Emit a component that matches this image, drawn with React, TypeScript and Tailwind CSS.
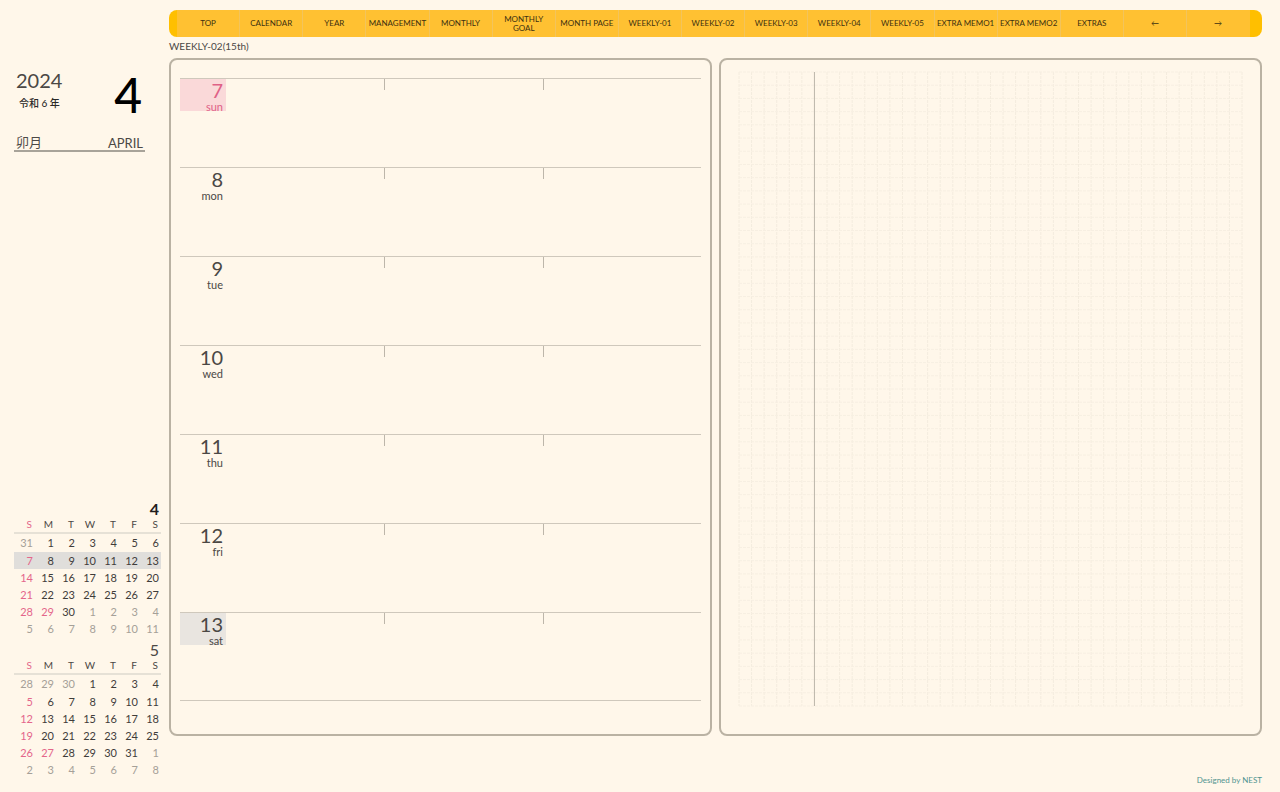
/**
 * Weekly planner page
 * Sidebar with month info and mini calendars, week column and grid memo page
 */

const NAV_ITEMS = [
  "TOP",
  "CALENDAR",
  "YEAR",
  "MANAGEMENT",
  "MONTHLY",
  "MONTHLY GOAL",
  "MONTH PAGE",
  "WEEKLY-01",
  "WEEKLY-02",
  "WEEKLY-03",
  "WEEKLY-04",
  "WEEKLY-05",
  "EXTRA MEMO1",
  "EXTRA MEMO2",
  "EXTRAS",
  "←",
  "→",
];

const WEEKDAYS = ["S", "M", "T", "W", "T", "F", "S"];

const WEEK = [
  { date: 7, name: "sun" },
  { date: 8, name: "mon" },
  { date: 9, name: "tue" },
  { date: 10, name: "wed" },
  { date: 11, name: "thu" },
  { date: 12, name: "fri" },
  { date: 13, name: "sat" },
];

const GRID_COLS = 40;
const GRID_ROWS = 48;

export default function App() {
  return (
    <div className="flex min-h-screen bg-[#fff7ea] font-['Lato','Noto_Sans_CJK_JP',sans-serif] text-[#4b4845]">
      {/* Sidebar */}
      <aside className="flex w-[169px] shrink-0 flex-col pt-[68px] pb-3.5 pl-3.5">
        <MonthInfo />
        <div className="mt-auto mr-2 flex flex-col gap-[5px]">
          <MiniCalendar month={4} prevDays={31} lead={1} days={30} holidays={[29]} activeWeek={1} current />
          <MiniCalendar month={5} prevDays={30} lead={3} days={31} holidays={[27]} />
        </div>
      </aside>

      {/* Planner */}
      <div className="flex min-w-0 flex-1 flex-col pt-2.5 pr-[18px] pb-1.5">
        <NavBar />
        <h1 className="h-[21px] text-[10px] leading-[18px]">WEEKLY-02(15th)</h1>
        <main className="grid grid-cols-2 gap-[7px]">
          <WeekPanel />
          <MemoPanel />
        </main>
        <footer className="mt-auto text-right text-[8px] leading-3 text-[#4f9490]">
          Designed by NEST
        </footer>
      </div>
    </div>
  );
}

function NavBar() {
  return (
    <nav className="flex h-[27px] shrink-0 overflow-hidden rounded-lg bg-[#ffbf00] pr-3 pl-2">
      {NAV_ITEMS.map((item) => (
        <a
          key={item}
          href="#"
          className="flex min-w-0 flex-1 basis-0 items-center justify-center border-r border-[#f3c45c] bg-[#ffc132] text-center text-[8px] leading-[9px] text-[#3d3010] last:border-[#ffc132]"
        >
          <span className={item === "MONTHLY GOAL" ? "w-10" : "whitespace-nowrap"}>{item}</span>
        </a>
      ))}
    </nav>
  );
}

function MonthInfo() {
  return (
    <header className="w-[131px] border-b-2 border-[#a8a399]">
      <div className="flex justify-between pr-[3px] pl-0.5">
        <div>
          <div className="text-[20px] leading-6">2024</div>
          <div className="pl-[3px] text-[10px] leading-[22px] font-medium text-[#2b2927]">令和 6 年</div>
        </div>
        <div className="text-[48px] leading-[54px] font-medium text-black">4</div>
      </div>
      <div className="flex items-end justify-between px-0.5 pt-3">
        <span className="text-[13px] leading-4">卯月</span>
        <span className="text-[13px] leading-[14px]">APRIL</span>
      </div>
    </header>
  );
}

interface MiniCalendarProps {
  month: number;
  prevDays: number;
  lead: number;
  days: number;
  holidays: number[];
  activeWeek?: number;
  current?: boolean;
}

function MiniCalendar({ month, prevDays, lead, days, holidays, activeWeek, current }: MiniCalendarProps) {
  // Always six rows, padded with the neighbouring months
  const cells = Array.from({ length: 42 }, (_, i) => {
    const day = i - lead + 1;
    if (day < 1) return { day: prevDays + day, tone: "text-[#a5a098]" };
    if (day > days) return { day: day - days, tone: "text-[#a5a098]" };
    const red = i % 7 === 0 || holidays.includes(day);
    return { day, tone: red ? "text-[#e4668a]" : "text-[#3f3c3a]" };
  });

  return (
    <table className="w-full table-fixed border-collapse text-right text-[11px]">
      <caption
        className={
          current
            ? "pr-0.5 text-right text-[16px] leading-4 font-bold text-[#1f1d1c]"
            : "pr-0.5 text-right text-[16px] leading-4"
        }
      >
        {month}
      </caption>
      <thead>
        <tr className="h-4 border-b-2 border-[#e6e1d6]">
          {WEEKDAYS.map((d, i) => (
            <th
              key={i}
              className={
                i === 0
                  ? "p-0 pr-[3px] align-top text-[10px] leading-[14px] font-normal text-[#e4668a]"
                  : "p-0 pr-[3px] align-top text-[10px] leading-[14px] font-normal"
              }
            >
              {d}
            </th>
          ))}
        </tr>
      </thead>
      <tbody>
        {[0, 1, 2, 3, 4, 5].map((week) => (
          <tr key={week} className={week === activeWeek ? "bg-[#e0dedb]" : "first:h-[19px]"}>
            {cells.slice(week * 7, week * 7 + 7).map((cell, i) => (
              <td key={i} className={`p-0 pr-0.5 align-top leading-[17px] ${cell.tone}`}>
                {cell.day}
              </td>
            ))}
          </tr>
        ))}
      </tbody>
    </table>
  );
}

function WeekPanel() {
  return (
    <section className="rounded-lg border-2 border-[#bab2a3] px-[9px] pt-[18px] pb-[33px]">
      {WEEK.map((day) => (
        <div
          key={day.date}
          className="grid h-[89px] grid-cols-[46px_158fr_159fr_158fr] border-t border-[#cfc8bc] last:border-b"
        >
          <DayLabel date={day.date} name={day.name} />
          <div />
          <div className="h-[11px] border-l border-[#bdb6aa]" />
          <div className="h-[11px] border-l border-[#bdb6aa]" />
        </div>
      ))}
    </section>
  );
}

function DayLabel({ date, name }: { date: number; name: string }) {
  const tone =
    name === "sun" ? "bg-[#fad9d9] text-[#df6186]" : name === "sat" ? "bg-[#e9e5e0]" : "";

  return (
    <div className={`h-8 pr-[3px] text-right ${tone}`}>
      <div className="text-[20px] leading-[22px]">{date}</div>
      <div className="text-[11px] leading-3">{name}</div>
    </div>
  );
}

function MemoPanel() {
  return (
    <section className="flex rounded-lg border-2 border-[#bab2a3] pt-3 pr-[18px] pb-[28px] pl-[18px]">
      <svg className="h-auto w-full flex-1 overflow-visible" aria-hidden="true">
        {Array.from({ length: GRID_COLS + 1 }, (_, i) => (
          <line
            key={`v${i}`}
            x1={`${(i * 100) / GRID_COLS}%`}
            x2={`${(i * 100) / GRID_COLS}%`}
            y1="0"
            y2="100%"
            stroke="#f4ecde"
            strokeDasharray="3 1"
          />
        ))}
        {Array.from({ length: GRID_ROWS + 1 }, (_, i) => (
          <line
            key={`h${i}`}
            x1="0"
            x2="100%"
            y1={`${(i * 100) / GRID_ROWS}%`}
            y2={`${(i * 100) / GRID_ROWS}%`}
            stroke="#f7efe2"
            strokeDasharray="3 1"
          />
        ))}
        {/* Margin line */}
        <line x1="15%" x2="15%" y1="0" y2="100%" stroke="#bdb7ac" />
      </svg>
    </section>
  );
}
